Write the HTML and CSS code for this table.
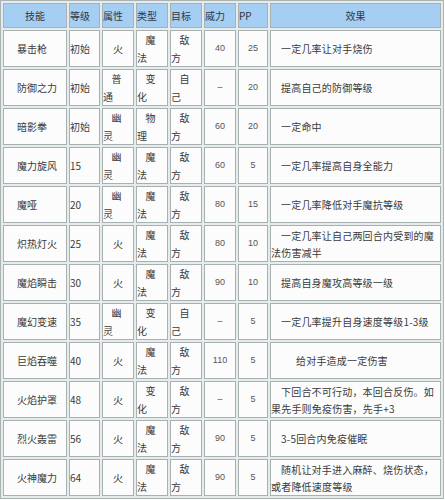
FILE: index.html
```html
<!DOCTYPE html>
<html lang="zh-CN">
<head>
<meta charset="utf-8">
<title>技能表</title>
<link rel="stylesheet" href="styles.css">
</head>
<body>
<table class="skills">
  <thead>
    <tr>
      <th class="c1 center">技能</th>
      <th class="c2">等级</th>
      <th class="c3">属性</th>
      <th class="c4">类型</th>
      <th class="c5">目标</th>
      <th class="c6">威力</th>
      <th class="c7">PP</th>
      <th class="c8 center">效果</th>
    </tr>
  </thead>
  <tbody>
    <tr>
      <td class="name">暴击枪</td><td class="lv">初始</td>
      <td class="one">火</td>
      <td class="st"><span class="t1">魔</span><span class="t2">法</span></td>
      <td class="st"><span class="t1">敌</span><span class="t2">方</span></td>
      <td class="num">40</td><td class="num">25</td>
      <td class="eff">一定几率让对手烧伤</td>
    </tr>
    <tr>
      <td class="name">防御之力</td><td class="lv">初始</td>
      <td class="st"><span class="t1">普</span><span class="t2">通</span></td>
      <td class="st"><span class="t1">变</span><span class="t2">化</span></td>
      <td class="st"><span class="t1">自</span><span class="t2">己</span></td>
      <td class="num">–</td><td class="num">20</td>
      <td class="eff">提高自己的防御等级</td>
    </tr>
    <tr>
      <td class="name">暗影拳</td><td class="lv">初始</td>
      <td class="st"><span class="t1">幽</span><span class="t2">灵</span></td>
      <td class="st"><span class="t1">物</span><span class="t2">理</span></td>
      <td class="st"><span class="t1">敌</span><span class="t2">方</span></td>
      <td class="num">60</td><td class="num">20</td>
      <td class="eff">一定命中</td>
    </tr>
    <tr>
      <td class="name">魔力旋风</td><td class="lv">15</td>
      <td class="st"><span class="t1">幽</span><span class="t2">灵</span></td>
      <td class="st"><span class="t1">魔</span><span class="t2">法</span></td>
      <td class="st"><span class="t1">敌</span><span class="t2">方</span></td>
      <td class="num">60</td><td class="num">5</td>
      <td class="eff">一定几率提高自身全能力</td>
    </tr>
    <tr>
      <td class="name">魔哑</td><td class="lv">20</td>
      <td class="st"><span class="t1">幽</span><span class="t2">灵</span></td>
      <td class="st"><span class="t1">魔</span><span class="t2">法</span></td>
      <td class="st"><span class="t1">敌</span><span class="t2">方</span></td>
      <td class="num">80</td><td class="num">15</td>
      <td class="eff">一定几率降低对手魔抗等级</td>
    </tr>
    <tr>
      <td class="name">炽热灯火</td><td class="lv">25</td>
      <td class="one">火</td>
      <td class="st"><span class="t1">魔</span><span class="t2">法</span></td>
      <td class="st"><span class="t1">敌</span><span class="t2">方</span></td>
      <td class="num">80</td><td class="num">10</td>
      <td class="eff">一定几率让自己两回合内受到的魔<br>法伤害减半</td>
    </tr>
    <tr>
      <td class="name">魔焰瞬击</td><td class="lv">30</td>
      <td class="one">火</td>
      <td class="st"><span class="t1">魔</span><span class="t2">法</span></td>
      <td class="st"><span class="t1">敌</span><span class="t2">方</span></td>
      <td class="num">90</td><td class="num">10</td>
      <td class="eff">提高自身魔攻高等级一级</td>
    </tr>
    <tr>
      <td class="name">魔幻变速</td><td class="lv">35</td>
      <td class="st"><span class="t1">幽</span><span class="t2">灵</span></td>
      <td class="st"><span class="t1">变</span><span class="t2">化</span></td>
      <td class="st"><span class="t1">自</span><span class="t2">己</span></td>
      <td class="num">–</td><td class="num">5</td>
      <td class="eff">一定几率提升自身速度等级1-3级</td>
    </tr>
    <tr>
      <td class="name">巨焰吞噬</td><td class="lv">40</td>
      <td class="one">火</td>
      <td class="st"><span class="t1">魔</span><span class="t2">法</span></td>
      <td class="st"><span class="t1">敌</span><span class="t2">方</span></td>
      <td class="num">110</td><td class="num">5</td>
      <td class="eff deep">给对手造成一定伤害</td>
    </tr>
    <tr>
      <td class="name">火焰护罩</td><td class="lv">48</td>
      <td class="one">火</td>
      <td class="st"><span class="t1">变</span><span class="t2">化</span></td>
      <td class="st"><span class="t1">敌</span><span class="t2">方</span></td>
      <td class="num">–</td><td class="num">5</td>
      <td class="eff">下回合不可行动，本回合反伤。如<br>果先手则免疫伤害，先手+3</td>
    </tr>
    <tr>
      <td class="name">烈火轰雷</td><td class="lv">56</td>
      <td class="one">火</td>
      <td class="st"><span class="t1">魔</span><span class="t2">法</span></td>
      <td class="st"><span class="t1">敌</span><span class="t2">方</span></td>
      <td class="num">90</td><td class="num">5</td>
      <td class="eff">3-5回合内免疫催眠</td>
    </tr>
    <tr>
      <td class="name">火神魔力</td><td class="lv">64</td>
      <td class="one">火</td>
      <td class="st"><span class="t1">魔</span><span class="t2">法</span></td>
      <td class="st"><span class="t1">敌</span><span class="t2">方</span></td>
      <td class="num">90</td><td class="num">5</td>
      <td class="eff">随机让对手进入麻醉、烧伤状态，<br>或者降低速度等级</td>
    </tr>
  </tbody>
</table>
</body>
</html>
```
FILE: styles.css
```css
html, body {
  margin: 0;
  padding: 0;
  background: #ffffff;
}

.skills {
  table-layout: fixed;
  width: 444px;
  border-collapse: separate;
  border-spacing: 2px;
  border: 1px solid #a9b3b3;
  background: #e6ecec;
  font-family: "Noto Sans CJK SC", "Noto Sans", sans-serif;
  font-size: 10px;
  color: #3a3a3a;
}

.skills th,
.skills td {
  box-sizing: border-box;
  padding: 0;
  border: 1px solid #a7b1b1;
  overflow: hidden;
}

.skills th {
  height: 25px;
  background: #a6cdf2;
  font-weight: normal;
  text-align: left;
  color: #2f3a46;
  line-height: 14px;
  vertical-align: middle;
}

.skills th.center { text-align: center; }

.c1 { width: 64px; }
.c2 { width: 31px; }
.c3 { width: 32px; }
.c4 { width: 32px; }
.c5 { width: 32px; }
.c6 { width: 32px; }
.c7 { width: 30px; }
.c8 { width: 171px; }

.skills td {
  height: 37px;
  background: #fcfcfc;
  vertical-align: middle;
  line-height: 17px;
}

.name {
  padding-left: 13px !important;
  text-align: left;
  white-space: nowrap;
}

.lv {
  text-align: left;
  white-space: nowrap;
}

.one {
  text-align: center;
}

.st .t1,
.st .t2 {
  display: block;
}

.st .t1 {
  text-align: center;
  padding-right: 3px;
}

.st .t2 {
  text-align: left;
  margin-top: 1px;
}

.num {
  text-align: center;
  font-family: "Liberation Sans", Arial, sans-serif;
  font-size: 9px;
  color: #555555;
}

.eff {
  text-align: left;
  text-indent: 10px;
  letter-spacing: 0.2px;
}

.eff.deep {
  text-indent: 25px;
}
```
